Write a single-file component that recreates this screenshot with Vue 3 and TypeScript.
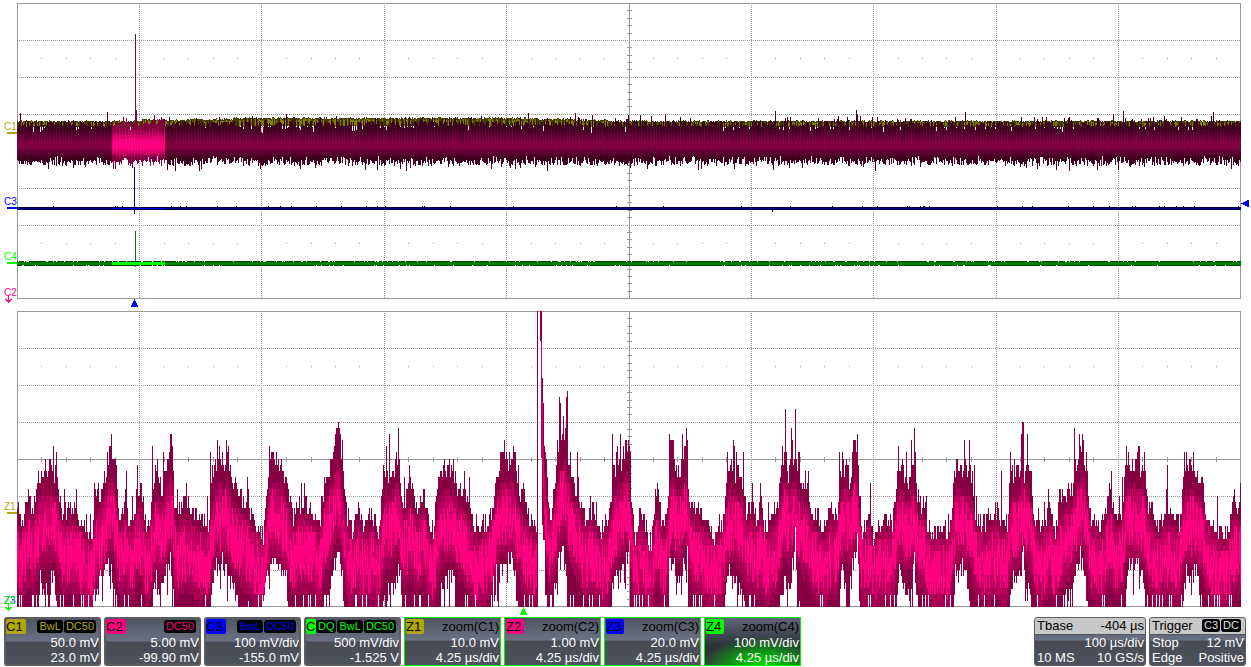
<script setup lang="ts">
type Point = [number, number]
interface Layer { color: string; d: string }
interface Pill { text: string }
interface Channel {
  id: string
  tone: string
  pills: Pill[]
  title?: string
  scale: string
  offset: string
  kind: 'input' | 'zoom' | 'active'
}

const WIDTH = 1224
const HEIGHT = 296
const LEFT = 17

function generator(seed: number) {
  let s = seed
  return () => {
    s = (s + 0x6d2b79f5) | 0
    let t = Math.imul(s ^ (s >>> 15), 1 | s)
    t = (t + Math.imul(t ^ (t >>> 7), 61 | t)) ^ t
    return ((t ^ (t >>> 14)) >>> 0) / 4294967296
  }
}

function bar(x: number, top: number, bottom: number, width = 1): string {
  const a = Math.max(0, Math.round(top))
  const b = Math.min(HEIGHT, Math.round(bottom))
  return b > a ? `M${x} ${a}h${width}v${b - a}h-${width}z` : ''
}

function buildLayers(colors: string[]) {
  const parts: Record<string, string[]> = {}
  colors.forEach((c) => { parts[c] = [] })
  return {
    add(color: string, x: number, top: number, bottom: number, width = 1) {
      parts[color].push(bar(x, top, bottom, width))
    },
    layers(): Layer[] {
      return colors.map((color) => ({ color, d: parts[color].join('') }))
    },
  }
}

/* Graticule */
const columns = [122, 244, 367, 489, 612, 734, 856, 979, 1101]
const rows = [37, 74, 111, 148, 185, 222, 259]
const minorX: number[] = []
for (let i = 1; i < 50; i++) if (i % 5) minorX.push(Math.round(i * 24.46))
const minorY: number[] = []
for (let i = 1; i < 40; i++) if (i % 5) minorY.push(Math.round(i * 7.38))
const ticks = minorX.map((x) => `M${x} 146h1v5h-1z`).join('') + minorY.map((y) => `M610 ${y}h5v1h-5z`).join('')
const dots = [55, 240].map((y) => minorX.map((x) => `M${x} ${y}h1v1h-1z`).join('')).join('')

/* Full acquisition */
function acquisition(): Layer[] {
  const rnd = generator(41)
  const g = buildLayers(['#404000', '#808000', '#400020', '#580030', '#6c0038', '#800040', '#b8005c', '#e00070', '#ff0080', '#000040', '#000090', '#0000ff', '#004000', '#008000', '#00ff00'])
  for (let x = 0; x < WIDTH; x++) {
    const px = x + LEFT
    const lit = px >= 112 && px < 165
    const rise = px < 120 ? 0 : px < 260 ? (px - 120) / 45 : px < 520 ? 3 : Math.max(0, 3 - (px - 520) / 35)
    const oliveTop = 118 - rise + (rnd() < 0.3 ? 1 : 0) - (rnd() < 0.2 ? 1 : 0)
    g.add('#404000', x, oliveTop, 124 - rise / 4)
    if (rnd() < 0.6) g.add('#808000', x, oliveTop + 1 + Math.floor(rnd() * 2), 122 + rnd() * 2)
    const r = rnd()
    let top = r < 0.5 ? 118 + rnd() * 2 : r < 0.92 ? 121 + rnd() * 3 : 125 + rnd() * 5
    if (rnd() < 0.08) top = 113 + rnd() * 4
    if (rnd() < 0.012) top = 107 + rnd() * 6
    if (px > 139 && px < 165) top -= 2
    let bottom = 157 + rnd() * 6
    if (rnd() < 0.25) bottom = 153 + rnd() * 5
    if (rnd() < 0.05) bottom = 163 + rnd() * 5
    const depth = (x % 3) * 3 + rnd() * 3
    if (lit) {
      g.add('#800040', x, top, bottom)
      g.add('#b8005c', x, 124 + depth, 155 - depth / 2)
      g.add('#e00070', x, 128 + depth, 152 - depth / 2)
      g.add('#ff0080', x, 132 + depth, 149 - depth / 2)
    } else {
      g.add('#400020', x, top, bottom)
      g.add('#580030', x, 124 + depth, 155 - depth / 2)
      g.add('#6c0038', x, 129 + depth, 151 - depth / 2)
      g.add('#800040', x, 132 + depth, 148 - depth / 2)
    }
    g.add('#000040', x, rnd() < 0.04 ? 203 : 204, 207)
    g.add(lit ? '#0000ff' : '#000090', x, 205, 206)
    g.add('#004000', x, rnd() < 0.12 ? 259 : 258, rnd() < 0.06 ? 262 : 263)
    g.add(lit ? '#00ff00' : '#008000', x, 259, 262)
  }
  g.add('#800040', 118, 31, 120)
  g.add('#800040', 119, 107, 122)
  g.add('#000090', 117, 164, 211)
  g.add('#000040', 755, 204, 209)
  g.add('#008000', 118, 228, 264)
  return g.layers()
}

/* Zoomed acquisition: envelopes as [x, y] knots */
const upper: Point[] = [
  [17, 510], [22, 525], [27, 495], [33, 508], [38, 483], [42, 470], [53, 470], [58, 487], [62, 515], [70, 505], [80, 520], [92, 540], [95, 498],
  [103, 487], [108, 460], [111, 447], [115, 467], [118, 510], [123, 520], [125, 490], [128, 520], [135, 517], [137, 483], [142, 500], [147, 533],
  [152, 500], [155, 473], [162, 490], [167, 467], [170, 439], [172, 450], [173, 477], [175, 520], [183, 503], [200, 523], [208, 523], [212, 483],
  [217, 460], [227, 463], [232, 483], [240, 497], [253, 520], [263, 537], [267, 487], [270, 458], [283, 470], [290, 500], [293, 527], [297, 503],
  [310, 507], [320, 527], [324, 483], [330, 467], [336, 438], [339, 430], [342, 477], [347, 517], [352, 530], [357, 510], [363, 530], [372, 517],
  [378, 537], [382, 493], [385, 477], [393, 477], [398, 450], [400, 478], [402, 508], [410, 485], [417, 512], [423, 492], [428, 518], [433, 532],
  [438, 485], [443, 472], [453, 468], [458, 492], [463, 492], [470, 515], [475, 535], [483, 522], [488, 522], [493, 502], [497, 472], [503, 455],
  [507, 462], [513, 456], [517, 485], [522, 502], [528, 518], [533, 525], [540, 525], [543, 405], [544, 440], [546, 475], [548, 500], [551, 520],
  [553, 490], [557, 465], [559, 437], [563, 437], [567, 430], [568, 470], [572, 470], [575, 500], [577, 480], [580, 498], [583, 518], [592, 512],
  [600, 528], [607, 525], [610, 505], [613, 472], [618, 472], [625, 450], [629, 445], [631, 505], [635, 538], [640, 512], [645, 528], [650, 548],
  [653, 522], [657, 490], [662, 528], [667, 518], [669, 458], [672, 445], [677, 475], [682, 465], [687, 440], [688, 492], [693, 512], [700, 508],
  [705, 525], [715, 535], [723, 522], [727, 470], [733, 470], [743, 482], [746, 512], [753, 505], [757, 525], [760, 495], [765, 532], [777, 508],
  [782, 468], [786, 450], [788, 485], [792, 450], [797, 467], [802, 492], [805, 480], [812, 512], [820, 525], [825, 530], [832, 507], [837, 523],
  [839, 470], [847, 463], [850, 487], [853, 455], [857, 440], [859, 493], [862, 533], [870, 510], [873, 537], [882, 520], [892, 523], [896, 493],
  [898, 463], [907, 480], [912, 477], [915, 452], [917, 507], [923, 500], [928, 530], [945, 533], [952, 517], [954, 467], [963, 470], [972, 477],
  [975, 517], [983, 527], [997, 510], [1000, 527], [1007, 523], [1010, 477], [1020, 473], [1023, 430], [1024, 480], [1027, 463], [1031, 477],
  [1033, 510], [1040, 533], [1050, 507], [1055, 530], [1060, 500], [1072, 490], [1075, 465], [1082, 450], [1087, 477], [1090, 517], [1103, 527],
  [1110, 487], [1115, 520], [1123, 510], [1125, 463], [1137, 466], [1145, 470], [1147, 503], [1157, 527], [1167, 513], [1180, 527], [1183, 473],
  [1192, 470], [1202, 483], [1205, 510], [1217, 533], [1227, 537], [1233, 507], [1240, 510],
]
const lower: Point[] = [
  [17, 610], [37, 610], [40, 580], [48, 590], [53, 572], [58, 610], [92, 610], [95, 590], [108, 562], [113, 580], [116, 610], [151, 610],
  [154, 575], [160, 590], [165, 575], [170, 555], [174, 610], [210, 610], [214, 570], [220, 555], [228, 578], [232, 590], [240, 600],
  [262, 610], [267, 580], [270, 563], [286, 575], [288, 610], [322, 610], [328, 580], [337, 552], [341, 565], [344, 610], [381, 610],
  [386, 590], [397, 575], [400, 560], [402, 610], [436, 610], [440, 590], [452, 573], [456, 600], [459, 610], [490, 610], [494, 580],
  [500, 570], [513, 560], [516, 590], [518, 610], [537, 610], [541, 458], [543, 535], [545, 560], [546, 610], [552, 610], [555, 580], [559, 557],
  [563, 545], [565, 570], [568, 610], [610, 610], [612, 590], [616, 575], [625, 562], [629, 550], [630, 610], [667, 610], [669, 565],
  [676, 570], [684, 562], [687, 553], [688, 610], [724, 610], [728, 565], [735, 582], [743, 590], [745, 610], [779, 610], [782, 570],
  [790, 582], [795, 530], [797, 590], [801, 610], [838, 610], [841, 570], [845, 575], [848, 607], [851, 575], [857, 542], [860, 610],
  [896, 610], [899, 560], [903, 585], [910, 600], [914, 555], [917, 610], [953, 610], [955, 575], [965, 562], [970, 600], [975, 610],
  [1009, 610], [1013, 570], [1020, 575], [1023, 542], [1025, 590], [1028, 575], [1031, 610], [1062, 610], [1070, 590], [1075, 570],
  [1082, 550], [1088, 610], [1124, 610], [1127, 565], [1138, 563], [1143, 580], [1146, 610], [1182, 610], [1186, 570], [1195, 572],
  [1203, 610], [1240, 610],
]
const spikes: Record<number, number> = {
  45: 458, 56: 452, 111: 433, 126: 470, 152: 446, 157: 458, 163: 452, 170: 433, 171: 433, 186: 482, 210: 452, 217: 439, 219: 446, 226: 439,
  247: 476, 269: 446, 276: 452, 301: 482, 338: 421, 339: 427, 342: 439, 386: 446, 389: 433, 398: 427, 449: 458, 453: 458, 464: 470, 469: 476,
  504: 439, 513: 446, 559: 396, 560: 403, 563: 415, 566: 396, 567: 390, 570: 452, 577: 452, 612: 433, 617: 446, 620: 433, 626: 439, 628: 439,
  670: 439, 671: 439, 682: 433, 686: 427, 727: 452, 733: 439, 736: 455, 743: 452, 760: 482, 782: 446, 785: 409, 791: 427, 792: 439, 795: 409,
  798: 452, 805: 470, 839: 452, 842: 452, 853: 439, 857: 433, 870: 482, 898: 446, 906: 452, 911: 439, 914: 427, 956: 458, 964: 439, 969: 439,
  974: 464, 1001: 470, 1010: 452, 1014: 458, 1021: 433, 1022: 421, 1023: 421, 1027: 433, 1048: 489, 1074: 427, 1082: 433, 1083: 439, 1086: 452,
  1111: 470, 1122: 476, 1126: 446, 1138: 446, 1139: 446, 1144: 452, 1167: 464, 1184: 452, 1186: 452, 1189: 458, 1193: 452, 1217: 495, 1234: 489, 1240: 482,
}

function sample(knots: Point[], x: number): number {
  for (let i = 1; i < knots.length; i++) {
    if (x <= knots[i][0]) {
      const [x0, y0] = knots[i - 1]
      const [x1, y1] = knots[i]
      return y0 + ((y1 - y0) * (x - x0)) / (x1 - x0)
    }
  }
  return knots[knots.length - 1][1]
}

function zoomTrace(): Layer[] {
  const rnd = generator(97)
  const g = buildLayers(['#880044', '#a60053', '#c40062', '#ff0080', '#d8006c'])
  const snap = (y: number) => Math.round((y - 311) / 6.15) * 6.15
  for (let x = 0; x < WIDTH; x++) {
    const px = x + LEFT
    if (px >= 537 && px <= 542) continue
    const base = sample(upper, px)
    let smooth = 0
    for (let k = -2; k <= 2; k++) smooth += sample(upper, Math.max(17, px + (px > 532 && px < 547 ? 0 : k))) / 5
    let top = base + (rnd() - 0.55) * 20
    if (rnd() < 0.07) top -= 16
    if (spikes[px]) top = spikes[px]
    const low = sample(lower, px)
    let bottom = low + (rnd() - 0.45) * 24
    if (low < 602 && rnd() < 0.14) bottom += 24
    if (low > 604) bottom = rnd() < 0.12 ? 592 : 610
    const core = smooth + 33 - (smooth - 467) * 0.25
    const floor = Math.min(bottom, 607)
    const paint = (color: string, a: number, b: number) =>
      g.add(color, x, Math.max(snap(a), snap(top)), Math.min(snap(b), snap(floor) + 1))
    paint('#880044', top, 611)
    paint('#a60053', core - 12 + (rnd() - 0.5) * 10, core + 58 + rnd() * 8)
    paint('#c40062', core - 4 + (rnd() - 0.5) * 12, core + 48 + (rnd() - 0.5) * 14)
    const coreTop = core + 6 + (rnd() - 0.5) * 26
    const coreBottom = core + 40 + (rnd() - 0.5) * 26
    paint('#ff0080', coreTop, coreBottom)
    if (rnd() < 0.2) paint('#d8006c', coreTop, coreTop + 12 + rnd() * 12)
    if (rnd() < 0.15) paint('#d8006c', coreBottom - 18, coreBottom)
  }
  g.add('#880044', 520, 0, 296)
  g.add('#880044', 523, 0, 30, 2)
  g.add('#c40062', 524, 28, 147)
  g.add('#880044', 525, 67, 214)
  g.add('#c40062', 525, 90, 160)
  return g.layers()
}

const graphs = [
  { id: 'main', label: 'Channels C1 to C4', layers: acquisition() },
  { id: 'zoom', label: 'Zoom traces Z1 to Z4', layers: zoomTrace() },
]

const pills = (...names: string[]): Pill[] => names.map((text) => ({ text }))
const channels: Channel[] = [
  { id: 'C1', tone: 'olive', pills: pills('BwL', 'DC50'), scale: '50.0 mV', offset: '23.0 mV', kind: 'input' },
  { id: 'C2', tone: 'pink', pills: pills('DC50'), scale: '5.00 mV', offset: '-99.90 mV', kind: 'input' },
  { id: 'C3', tone: 'blue', pills: pills('BwL', 'DC50'), scale: '100 mV/div', offset: '-155.0 mV', kind: 'input' },
  { id: 'C4', tone: 'green', pills: pills('DQ', 'BwL', 'DC50'), scale: '500 mV/div', offset: '-1.525 V', kind: 'input' },
  { id: 'Z1', tone: 'olive', pills: [], title: 'zoom(C1)', scale: '10.0 mV', offset: '4.25 µs/div', kind: 'zoom' },
  { id: 'Z2', tone: 'pink', pills: [], title: 'zoom(C2)', scale: '1.00 mV', offset: '4.25 µs/div', kind: 'zoom' },
  { id: 'Z3', tone: 'blue', pills: [], title: 'zoom(C3)', scale: '20.0 mV', offset: '4.25 µs/div', kind: 'zoom' },
  { id: 'Z4', tone: 'green', pills: [], title: 'zoom(C4)', scale: '100 mV/div', offset: '4.25 µs/div', kind: 'active' },
]
</script>

<template>
  <main class="scope">
    <section v-for="graph in graphs" :key="graph.id" class="graph" :aria-label="graph.label">
      <svg class="plot" :viewBox="`0 0 ${WIDTH} ${HEIGHT}`" preserveAspectRatio="none" shape-rendering="crispEdges" aria-hidden="true">
        <g class="dotted">
          <line v-for="x in columns" :key="'c' + x" :x1="x + 0.5" y1="2" :x2="x + 0.5" y2="295" />
          <line v-for="y in rows" :key="'r' + y" x1="2" :y1="y + 0.5" x2="1223" :y2="y + 0.5" />
        </g>
        <path class="grid" :d="dots + ticks" />
        <path class="grid" d="M0 148h1224v1h-1224zM612 0h1v296h-1z" />
        <path class="grid" fill-rule="evenodd" d="M0 0h1224v296h-1224zM1 1v294h1222v-294z" />
        <path v-for="layer in graph.layers" :key="layer.color" :fill="layer.color" :d="layer.d" />
      </svg>

      <template v-if="graph.id === 'main'">
        <span class="tag olive-ink c1">C1</span>
        <span class="tag blue-ink c3">C3</span>
        <span class="tag green-ink c4">C4</span>
        <span class="tag pink-ink down c2">C2
          <svg class="arrow" viewBox="0 0 7 8" shape-rendering="crispEdges" aria-hidden="true"><path d="M3 0h1v8h-1zM0 4h2v1h3v-1h2v1h-1v1h-1v1h-3v-1h-1v-1h-1z" /></svg>
        </span>
        <svg class="pointer time blue-ink" viewBox="0 0 7 8" shape-rendering="crispEdges" aria-hidden="true"><path d="M3 0h1v2h1v2h1v2h1v2H0V6h1V4h1V2h1z" /></svg>
        <svg class="pointer level blue-ink" viewBox="0 0 8 7" shape-rendering="crispEdges" aria-hidden="true"><path d="M0 3h2v-1h2v-1h2v-1h2v7h-2v-1h-2v-1h-2v-1h-2z" /></svg>
      </template>
      <template v-else>
        <span class="tag olive-ink z1">Z1</span>
        <span class="tag blue-ink down z2">Z3</span>
        <span class="tag green-ink down z2">Z2
          <svg class="arrow" viewBox="0 0 7 8" shape-rendering="crispEdges" aria-hidden="true"><path d="M3 0h1v8h-1zM0 4h2v1h3v-1h2v1h-1v1h-1v1h-3v-1h-1v-1h-1z" /></svg>
        </span>
        <svg class="pointer delay green-ink" viewBox="0 0 7 8" shape-rendering="crispEdges" aria-hidden="true"><path d="M3 0h1v2h1v2h1v2h1v2H0V6h1V4h1V2h1z" /></svg>
      </template>
    </section>

    <footer class="status">
      <button v-for="ch in channels" :key="ch.id" type="button" class="box" :class="ch.kind">
        <span class="head">
          <span class="badge" :class="ch.tone">{{ ch.id }}</span>
          <span v-if="ch.title" class="title">{{ ch.title }}</span>
          <span v-else class="pills">
            <span v-for="pill in ch.pills" :key="pill.text" class="pill" :class="ch.tone + '-ink'">{{ pill.text }}</span>
          </span>
        </span>
        <span class="value">{{ ch.scale }}</span>
        <span class="value">{{ ch.offset }}</span>
      </button>

      <button type="button" class="box info timebase">
        <span class="head"><span>Tbase</span><span>-404 µs</span></span>
        <span class="value">100 µs/div</span>
        <span class="pair"><span>10 MS</span><span>10 GS/s</span></span>
      </button>
      <button type="button" class="box info">
        <span class="head">
          <span>Trigger</span>
          <span class="pills"><span class="pill light">C3</span><span class="pill light">DC</span></span>
        </span>
        <span class="pair"><span>Stop</span><span>12 mV</span></span>
        <span class="pair"><span>Edge</span><span>Positive</span></span>
      </button>
    </footer>
  </main>
</template>

<style>
body { background: #fff; }
</style>

<style scoped>
.scope {
  display: flex;
  flex-direction: column;
  gap: 12px;
  padding-top: 3px;
  font-family: "Liberation Sans", Arial, sans-serif;
  font-size: 13px;
}
.graph { position: relative; height: 296px; margin: 0 10px 0 17px; }
.plot { display: block; width: 100%; height: 100%; }
.grid { fill: #999; }
.dotted line { stroke: #999; stroke-width: 1; stroke-dasharray: 1 1; }

.tag {
  position: absolute;
  left: -13px;
  width: 13px;
  height: 10px;
  font-size: 10px;
  line-height: 10px;
  white-space: nowrap;
}
.tag::after {
  content: "";
  position: absolute;
  left: 3px;
  top: 10px;
  width: 10px;
  height: 2px;
  background: currentColor;
}
.tag.down::after { display: none; }
.c1 { top: 119px; }
.c3 { top: 194px; }
.c4 { top: 249px; }
.c2 { top: 285px; }
.z1 { top: 191px; }
.z2 { top: 285px; }
.arrow { position: absolute; left: 1px; top: 7px; width: 7px; height: 8px; fill: currentColor; }
.pointer { position: absolute; width: 7px; height: 8px; fill: currentColor; }
.time { left: 9.35%; top: 296px; }
.delay { left: 41.1%; top: 296px; }
.level { left: 100%; top: 197px; width: 8px; height: 7px; }

.olive-ink { color: #b0a800; }
.pink-ink { color: #ff0080; }
.blue-ink { color: #0000ff; }
.green-ink { color: #00ff00; }
.light { color: #e0e0e0; }

.status { display: flex; gap: 3px; margin-top: -2px; padding: 0 5px 0 4px; }
.box {
  display: flex;
  flex: 0 1 97px;
  flex-direction: column;
  box-sizing: border-box;
  min-width: 0;
  height: 49px;
  margin: 0;
  padding: 0;
  overflow: hidden;
  border: 2px solid #5c5d63;
  border-radius: 3px;
  background: linear-gradient(#505563 0, #6b7084 22px, #484b54 23px, #4e525c 100%);
  color: #fff;
  font: inherit;
  line-height: 15px;
  text-align: right;
  white-space: nowrap;
}
.zoom, .active { padding: 1px; border: 1px solid #00f000; border-radius: 0; }
.active {
  background:
    radial-gradient(ellipse 60px 28px at 60% 100%, #00d800 0, rgba(0, 200, 0, 0.7) 45%, transparent 100%),
    linear-gradient(#60657a 0, #2c3038 60%, #343a40 100%);
}
.head { display: flex; flex: none; align-items: flex-start; height: 16px; color: #000; }
.badge { flex: 0 1 20px; min-width: 0; height: 15px; overflow: hidden; border-radius: 2px; text-align: left; }
.zoom .badge, .active .badge { flex-basis: 18px; }
.title { margin-left: auto; }
.olive { background: #b0a800; }
.pink { background: #ff0080; }
.blue { background: #0000ff; }
.green { background: #00ff00; }
.pills { display: flex; flex: none; gap: 1px; margin-left: auto; padding: 1px 3px 0 0; }
.pill { height: 13px; padding: 0 2px; border-radius: 3px; background: #000; font-size: 11px; line-height: 13px; }
.value { flex: none; }
.pair { display: flex; flex: none; justify-content: space-between; }
.info { border-width: 1px; }
.info .head { justify-content: space-between; height: 17px; padding: 0 1px 0 2px; border-bottom: 1px solid #505563; box-sizing: border-box; background: #c8c8c8; }
.info .value, .info .pair { padding: 0 1px 0 2px; }
.timebase { flex-basis: 112px; margin-left: auto; }
</style>
